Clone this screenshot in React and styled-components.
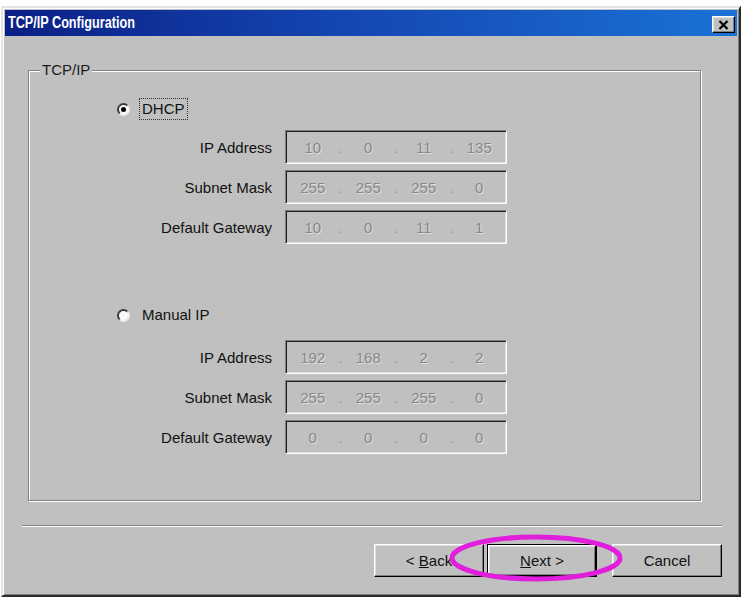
import React from 'react';
import styled, { createGlobalStyle } from 'styled-components';

const Global = createGlobalStyle`
  html, body { margin: 0; padding: 0; background: #fff; }
  body { font-family: "Liberation Sans", Arial, sans-serif; }
`;

const Page = styled.div`
  width: 745px;
  height: 601px;
  box-sizing: border-box;
  padding: 6px 4px 4px 1px;
  background: #fff;
`;

const Window = styled.div`
  width: 740px;
  height: 591px;
  box-sizing: border-box;
  background: #c0c0c0;
  border: 2px solid;
  border-color: #e4e4e4 #2a2a2a #2a2a2a #e4e4e4;
  box-shadow: inset 1px 1px 0 #fff, inset -1px -1px 0 #808080;
  padding: 2px;
  display: flex;
  flex-direction: column;
`;

const TitleBar = styled.div`
  height: 26px;
  flex: none;
  display: flex;
  align-items: center;
  justify-content: space-between;
  padding: 0 2px 0 3px;
  background: linear-gradient(to right, #0b1f86 0%, #1445b0 45%, #1a72d6 100%);
`;

/* Caption text is drawn in a narrow bold face */
const Title = styled.span`
  color: #fff;
  font-family: "Liberation Sans", Arial, sans-serif;
  font-weight: bold;
  font-size: 16px;
  display: inline-block;
  transform: scaleX(0.79);
  transform-origin: left center;
`;

const CloseButton = styled.button`
  width: 23px;
  height: 17px;
  padding: 0;
  margin-top: 3px;
  box-sizing: border-box;
  background: #c0c0c0;
  border: 1px solid;
  border-color: #fff #000 #000 #fff;
  box-shadow: inset -1px -1px 0 #808080, inset 1px 1px 0 #dfdfdf;
  display: flex;
  align-items: center;
  justify-content: center;
`;

const Body = styled.div`
  flex: 1;
  display: flex;
  flex-direction: column;
`;

const GroupBox = styled.div`
  margin: 34px 0 0 23px;
  width: 673px;
  height: 431px;
  box-sizing: border-box;
  border: 1px solid #808080;
  box-shadow: inset 1px 1px 0 #fff, 1px 1px 0 #fff;
  display: flex;
  flex-direction: column;
`;

const Caption = styled.span`
  align-self: flex-start;
  margin: -9px 0 0 11px;
  padding: 0 2px;
  background: #c0c0c0;
  font-size: 15px;
  line-height: 16px;
  color: #1a1a1a;
`;

const Section = styled.div`
  display: flex;
  flex-direction: column;
  margin-top: ${p => p.$top}px;
`;

const RadioRow = styled.label`
  display: flex;
  align-items: center;
  height: 22px;
  padding-left: 88px;
  gap: 9px;
  font-size: 15px;
  color: #111;
`;

const RadioDot = styled.span`
  width: 13px;
  height: 13px;
  box-sizing: border-box;
  border-radius: 50%;
  background: #fafafa;
  border: 2px solid;
  border-color: #3a3a3a #ececec #ececec #3a3a3a;
  display: flex;
  align-items: center;
  justify-content: center;
  &::after {
    content: "";
    width: 5px;
    height: 5px;
    border-radius: 50%;
    background: ${p => (p.$on ? '#000' : 'transparent')};
  }
`;

const RadioText = styled.span`
  padding: 0 2px;
  line-height: 20px;
  border: 1px dotted ${p => (p.$focus ? '#333' : 'transparent')};
`;

const Fields = styled.div`
  display: flex;
  flex-direction: column;
  gap: 6px;
  margin-top: ${p => p.$top}px;
`;

const FieldRow = styled.div`
  display: grid;
  grid-template-columns: 243px 222px;
  column-gap: 13px;
  align-items: center;
`;

const FieldLabel = styled.span`
  text-align: right;
  font-size: 15px;
  color: #111;
`;

const IpBox = styled.div`
  height: 34px;
  box-sizing: border-box;
  border: 1px solid;
  border-color: #808080 #fff #fff #808080;
  box-shadow: inset 1px 1px 0 #1e1e1e, inset -1px -1px 0 #dfdfdf;
  background: #c0c0c0;
  display: grid;
  grid-template-columns: 1fr 4px 1fr 4px 1fr 4px 1fr;
  align-items: center;
  padding: 1px;
`;

const Octet = styled.span`
  text-align: center;
  font-size: 15px;
  color: #888;
  text-shadow: 1px 1px 0 #dedede;
`;

const Dot = styled.span`
  text-align: center;
  font-size: 15px;
  color: #9a9a9a;
`;

const Separator = styled.div`
  margin: 24px 0 0 17px;
  width: 700px;
  height: 1px;
  background: #808080;
  box-shadow: 0 1px 0 #fff;
`;

const ButtonRow = styled.div`
  position: relative;
  margin-top: 18px;
  padding-right: 15px;
  display: flex;
  justify-content: flex-end;
  gap: 15px;
`;

const ButtonPair = styled.div`
  display: flex;
  gap: 3px;
`;

const Button = styled.button`
  width: 110px;
  height: 33px;
  box-sizing: border-box;
  padding: 0;
  background: #c0c0c0;
  font-family: "Liberation Sans", Arial, sans-serif;
  font-size: 15px;
  color: #111;
  border: 1px solid;
  border-color: ${p => (p.$default ? '#000' : '#fff #000 #000 #fff')};
  box-shadow: ${p =>
    p.$default
      ? 'inset 1px 1px 0 #fff, inset -1px -1px 0 #000, inset 2px 2px 0 #dfdfdf, inset -2px -2px 0 #808080'
      : 'inset -1px -1px 0 #808080, inset 1px 1px 0 #dfdfdf'};
`;

const Highlight = styled.svg`
  position: absolute;
  left: 441px;
  top: -13px;
  pointer-events: none;
  overflow: visible;
`;

const ipGroups = [
  {
    key: 'dhcp',
    label: 'DHCP',
    on: true,
    radioTop: 20,
    fieldsTop: 10,
    rows: [
      ['IP Address', ['10', '0', '11', '135']],
      ['Subnet Mask', ['255', '255', '255', '0']],
      ['Default Gateway', ['10', '0', '11', '1']],
    ],
  },
  {
    key: 'manual',
    label: 'Manual IP',
    on: false,
    radioTop: 60,
    fieldsTop: 14,
    rows: [
      ['IP Address', ['192', '168', '2', '2']],
      ['Subnet Mask', ['255', '255', '255', '0']],
      ['Default Gateway', ['0', '0', '0', '0']],
    ],
  },
];

function IpAddress({ parts }) {
  return (
    <IpBox>
      {parts.map((p, i) => (
        <React.Fragment key={i}>
          {i > 0 && <Dot>.</Dot>}
          <Octet>{p}</Octet>
        </React.Fragment>
      ))}
    </IpBox>
  );
}

export default function App() {
  return (
    <Page>
      <Global />
      <Window>
        <TitleBar>
          <Title>TCP/IP Configuration</Title>
          <CloseButton aria-label="Close">
            <svg width="11" height="10" viewBox="0 0 11 10">
              <path d="M1.5 1 L9.5 9 M9.5 1 L1.5 9" stroke="#000" strokeWidth="2.2" />
            </svg>
          </CloseButton>
        </TitleBar>
        <Body>
          <GroupBox>
            <Caption>TCP/IP</Caption>
            {ipGroups.map(g => (
              <Section key={g.key} $top={g.radioTop}>
                <RadioRow>
                  <RadioDot $on={g.on} />
                  <RadioText $focus={g.on}>{g.label}</RadioText>
                </RadioRow>
                <Fields $top={g.fieldsTop}>
                  {g.rows.map(([label, parts]) => (
                    <FieldRow key={label}>
                      <FieldLabel>{label}</FieldLabel>
                      <IpAddress parts={parts} />
                    </FieldRow>
                  ))}
                </Fields>
              </Section>
            ))}
          </GroupBox>
          <Separator />
          <ButtonRow>
            <ButtonPair>
              <Button>&lt; <u>B</u>ack</Button>
              <Button $default><u>N</u>ext &gt;</Button>
            </ButtonPair>
            <Button>Cancel</Button>
            <Highlight width="180" height="54" viewBox="0 0 180 54">
              <ellipse cx="90" cy="27" rx="84" ry="21" fill="none" stroke="#e01fdc" strokeWidth="5" />
            </Highlight>
          </ButtonRow>
        </Body>
      </Window>
    </Page>
  );
}
